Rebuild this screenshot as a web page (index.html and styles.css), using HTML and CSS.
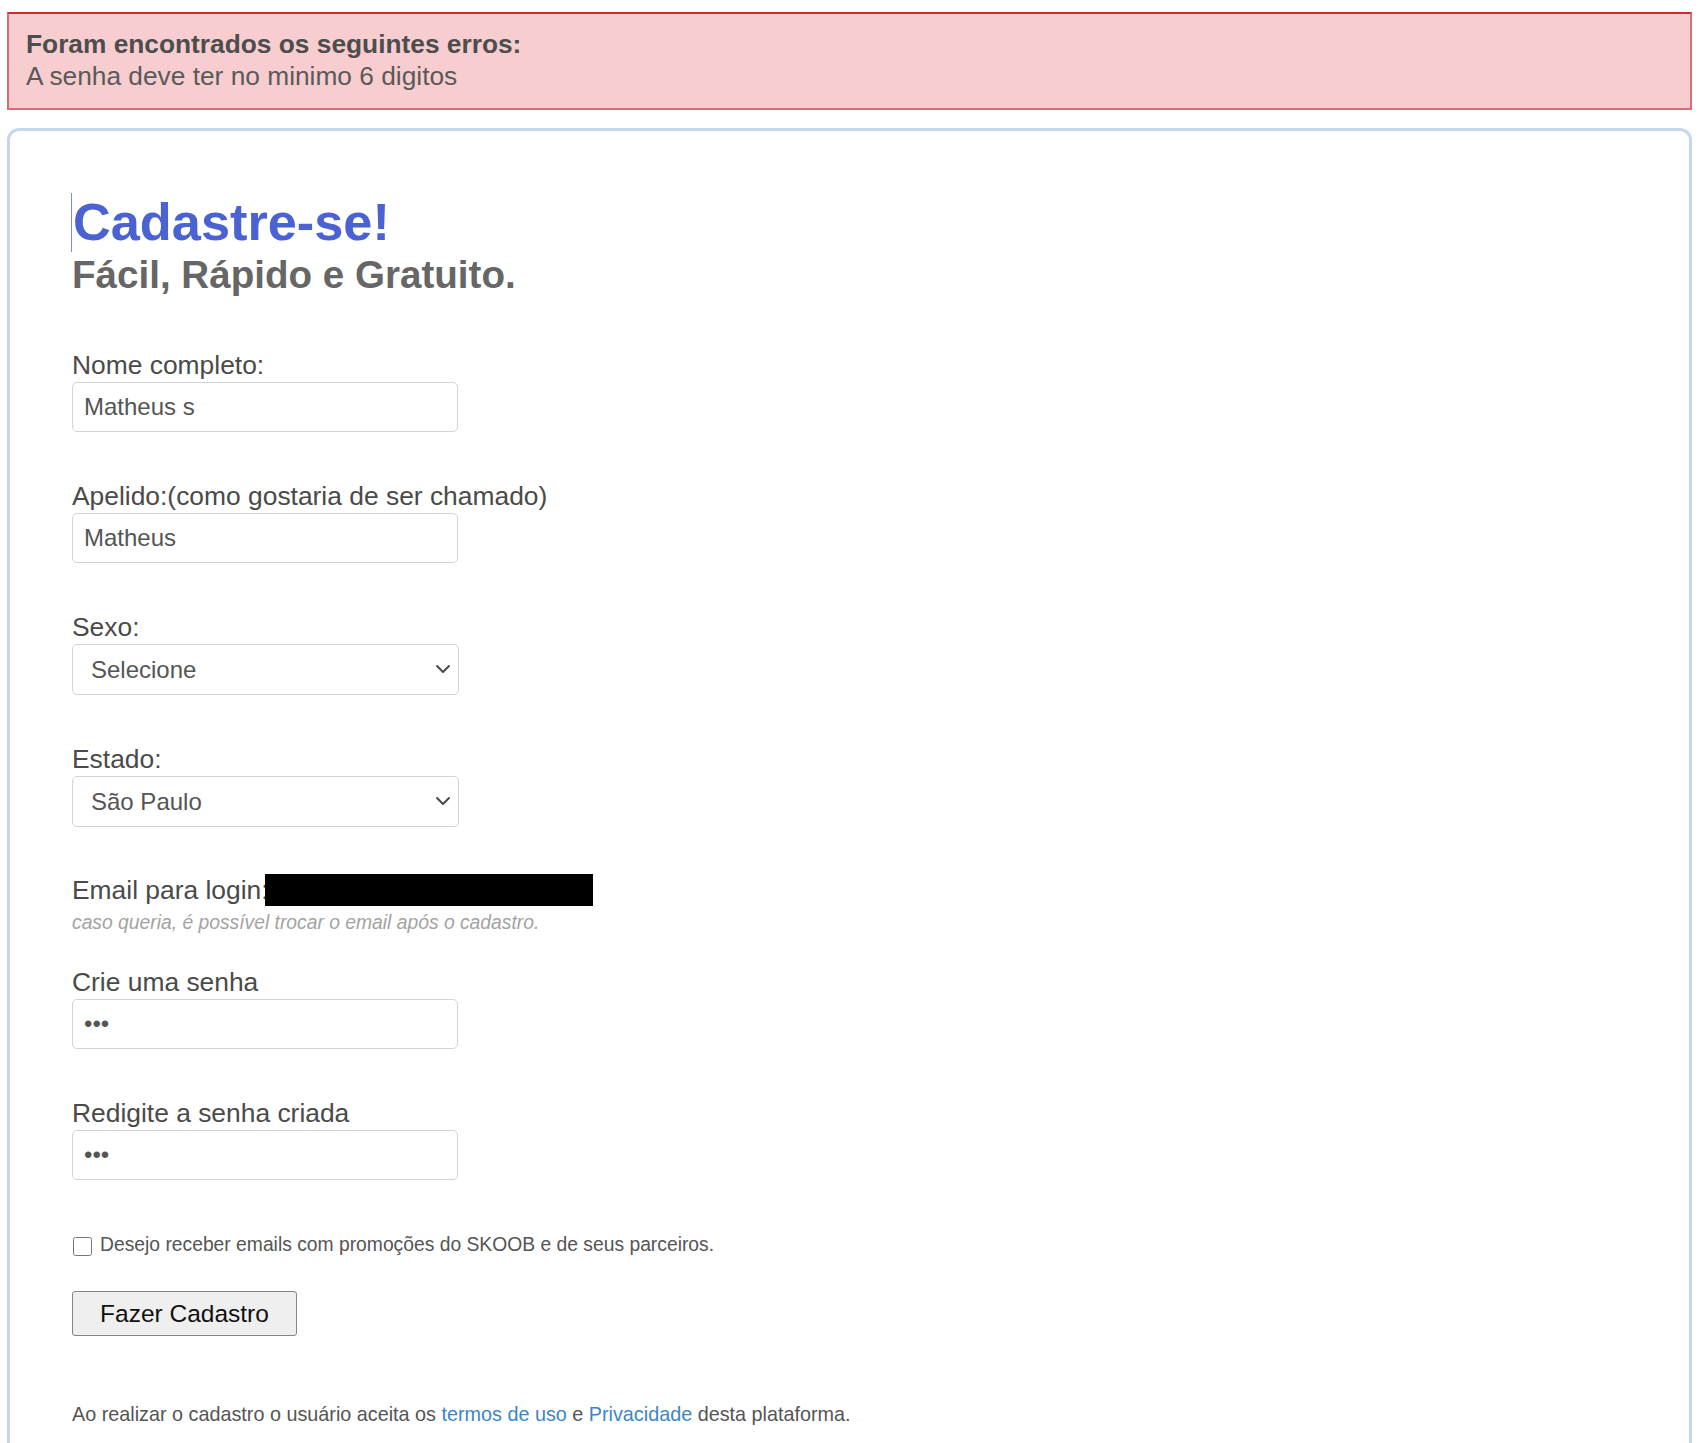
FILE: index.html
```html
<!DOCTYPE html>
<html lang="pt-BR">
<head>
<meta charset="utf-8">
<title>Cadastre-se</title>
<link rel="stylesheet" href="styles.css">
</head>
<body>
<div class="alert">
  <strong class="alert-title">Foram encontrados os seguintes erros:</strong>
  <div class="alert-msg">A senha deve ter no minimo 6 digitos</div>
</div>
<div class="card">
  <h1 class="title"><span class="caret"></span>Cadastre-se!</h1>
  <h2 class="subtitle">Fácil, Rápido e Gratuito.</h2>
  <form class="form">
    <div class="field">
      <label class="label">Nome completo:</label>
      <input class="input" type="text" value="Matheus s">
    </div>
    <div class="field">
      <label class="label">Apelido:(como gostaria de ser chamado)</label>
      <input class="input" type="text" value="Matheus">
    </div>
    <div class="field">
      <label class="label">Sexo:</label>
      <div class="select-wrap">
        <select class="select"><option>Selecione</option><option>Masculino</option><option>Feminino</option></select>
        <svg class="chevron" width="16" height="16" viewBox="0 0 16 16"><path d="M2 5 L8 11 L14 5" fill="none" stroke="#4a4a4a" stroke-width="2" stroke-linecap="round" stroke-linejoin="round"/></svg>
      </div>
    </div>
    <div class="field field-before-email">
      <label class="label">Estado:</label>
      <div class="select-wrap">
        <select class="select"><option>São Paulo</option></select>
        <svg class="chevron" width="16" height="16" viewBox="0 0 16 16"><path d="M2 5 L8 11 L14 5" fill="none" stroke="#4a4a4a" stroke-width="2" stroke-linecap="round" stroke-linejoin="round"/></svg>
      </div>
    </div>
    <div class="field field-email">
      <div class="label">Email para login:<span class="redacted"></span></div>
      <div class="hint">caso queria, é possível trocar o email após o cadastro.</div>
    </div>
    <div class="field">
      <label class="label">Crie uma senha</label>
      <input class="input" type="password" value="abc">
    </div>
    <div class="field field-last">
      <label class="label">Redigite a senha criada</label>
      <input class="input" type="password" value="abc">
    </div>
    <label class="check-row"><input class="checkbox" type="checkbox"><span>Desejo receber emails com promoções do SKOOB e de seus parceiros.</span></label>
    <button class="btn" type="button">Fazer Cadastro</button>
    <p class="terms">Ao realizar o cadastro o usuário aceita os <a class="link" href="#">termos de uso</a> e <a class="link" href="#">Privacidade</a> desta plataforma.</p>
  </form>
</div>
</body>
</html>
```

FILE: styles.css
```css
html, body {
  margin: 0;
  padding: 0;
  background: #fff;
  overflow: hidden;
}
body {
  font-family: "Liberation Sans", Arial, sans-serif;
  color: #4a4a4a;
}
.alert {
  margin: 12px 13px 0 7px;
  padding: 14px 17px 16px;
  background: #f7cdcf;
  border: 2px solid #da6d70;
  border-top-color: #cc2a2f;
  font-size: 26.3px;
  line-height: 32px;
  color: #555;
}
.alert-title {
  display: block;
  font-weight: bold;
  color: #4d4d4d;
}
.alert-msg {
  color: #5a5a5a;
}
.card {
  margin: 18px 13px 0 7px;
  padding: 62px 62px 60px;
  border: 3px solid #c6d7ec;
  border-bottom: none;
  border-radius: 12px 12px 0 0;
}
.title {
  margin: 0;
  font-size: 52.3px;
  line-height: 55px;
  font-weight: bold;
  color: #4b63d2;
}
.caret {
  display: inline-block;
  width: 1px;
  height: 59px;
  background: #7b8ee0;
  vertical-align: -12px;
  margin-right: 1px;
  margin-left: -1px;
}
.subtitle {
  margin: 0;
  font-size: 38.6px;
  line-height: 45px;
  font-weight: bold;
  color: #666;
}
.form {
  margin-top: 53px;
}
.field {
  margin-bottom: 49px;
}
.field-before-email {
  margin-bottom: 47px;
}
.field-email {
  margin-bottom: 32px;
}
.field-last {
  margin-bottom: 53px;
}
.label {
  display: block;
  font-size: 26.4px;
  line-height: 30px;
  margin-bottom: 2px;
  color: #4a4a4a;
}
.redacted {
  display: inline-block;
  width: 328px;
  height: 32px;
  background: #000;
  vertical-align: -7px;
  margin-left: -4px;
}
.hint {
  margin-top: 5px;
  font-size: 19.3px;
  line-height: 24px;
  font-style: italic;
  color: #a3a3a3;
}
.input, .select {
  display: block;
  box-sizing: border-box;
  width: 386px;
  height: 50px;
  margin: 0;
  border: 1px solid #d4d4d4;
  border-radius: 5px;
  background: #fff;
  font-family: "Liberation Sans", Arial, sans-serif;
  font-size: 24px;
  color: #555;
  outline: none;
}
.input {
  padding: 0 11px;
}
.select {
  width: 387px;
  height: 51px;
  padding: 0 40px 0 18px;
  -webkit-appearance: none;
  appearance: none;
}
.select-wrap {
  position: relative;
  width: 387px;
}
.chevron {
  position: absolute;
  right: 8px;
  top: 17px;
}
.check-row {
  display: flex;
  align-items: flex-start;
  font-size: 19.3px;
  line-height: 24px;
  color: #555;
}
.checkbox {
  width: 19px;
  height: 19px;
  margin: 4px 8px 0 1px;
  flex: none;
}
.btn {
  display: block;
  margin-top: 34px;
  width: 225px;
  height: 45px;
  padding: 0;
  background: #efefef;
  border: 1px solid #858585;
  border-radius: 3px;
  font-family: "Liberation Sans", Arial, sans-serif;
  font-size: 24.5px;
  color: #111;
}
.terms {
  margin: 66px 0 0;
  font-size: 19.8px;
  line-height: 24px;
  color: #555;
}
.link {
  color: #3a87c6;
  text-decoration: none;
}
```
